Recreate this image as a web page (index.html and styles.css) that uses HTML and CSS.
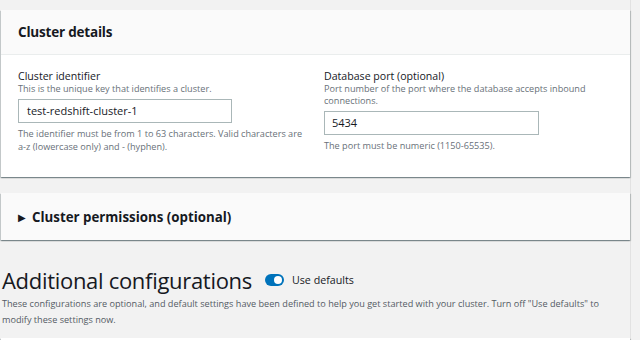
FILE: index.html
```html
<!DOCTYPE html>
<html lang="en">
<head>
    <meta charset="UTF-8">
    <meta name="viewport" content="width=device-width, initial-scale=1.0">
    <title>Cluster configuration</title>
    <link rel="stylesheet" href="styles.css">
</head>
<body>

<div class="page">
    <div class="card">
        <div class="card-header">
            <h2>Cluster details</h2>
        </div>
        <div class="card-body">
            <div class="field">
                <div class="label">Cluster identifier</div>
                <div class="desc">This is the unique key that identifies a cluster.</div>
                <div class="input input-left">test-redshift-cluster-1</div>
                <div class="constraint">The identifier must be from 1 to 63 characters. Valid characters are <span class="nowrap">a-z</span> (lowercase only) and - (hyphen).</div>
            </div>
            <div class="field">
                <div class="label">Database port (optional)</div>
                <div class="desc">Port number of the port where the database accepts inbound connections.</div>
                <div class="input input-right">5434</div>
                <div class="constraint">The port must be numeric (1150-65535).</div>
            </div>
        </div>
    </div>

    <div class="card collapsed">
        <span class="caret">&#9654;</span>
        <h2>Cluster permissions (optional)</h2>
    </div>

    <div class="section">
        <div class="section-title">
            <h1>Additional configurations</h1>
            <span class="toggle"><span class="knob"></span></span>
            <span class="toggle-label">Use defaults</span>
        </div>
        <p class="section-desc">These configurations are optional, and default settings have been defined to help you get started with your cluster. Turn off "Use defaults" to modify these settings now.</p>
    </div>

    <div class="card next"></div>
</div>

</body>
</html>
```

FILE: styles.css
```css
body {
    font-family: "Open Sans", Arial, sans-serif;
    background-color: #f2f2f2;
    color: #16191f;
    margin: 0;
}
.page {
    width: 629px;
    padding: 10px 0 0 1px;
    border-right: 1px solid #e2e2e2;
}
.card {
    background: white;
    box-shadow: 0 1px 1px 0 rgba(0, 28, 36, 0.3), 1px 1px 1px 0 rgba(0, 28, 36, 0.15), -1px 1px 1px 0 rgba(0, 28, 36, 0.15);
}
.card-header {
    height: 44px;
    background: #fafafa;
    border-bottom: 1px solid #eaeded;
    padding: 0 17px;
    display: flex;
    align-items: center;
}
h2 {
    margin: 0;
    font-size: 13.5px;
    letter-spacing: -0.2px;
    font-weight: 700;
}
.card-body {
    display: grid;
    grid-template-columns: 296px 1fr;
    gap: 10px;
    padding: 14px 17px 24px;
}
.label {
    font-size: 10.6px;
    line-height: 14px;
}
.desc {
    font-size: 9.15px;
    line-height: 12px;
    color: #687078;
}
.input {
    margin-top: 4px;
    height: 22px;
    border: 1px solid #aab7b8;
    font-size: 11px;
    line-height: 22px;
    padding: 0 8px;
    box-sizing: content-box;
}
.input-left {
    width: 196px;
}
.input-right {
    width: 198px;
    padding-left: 7px;
}
.constraint {
    margin-top: 4px;
    font-size: 9.15px;
    line-height: 13px;
    color: #687078;
}
.nowrap {
    white-space: nowrap;
}
.collapsed {
    margin-top: 16px;
    height: 47px;
    background: #fafafa;
    display: flex;
    align-items: center;
    padding: 0 17px;
    gap: 6px;
}
.collapsed h2 {
    font-size: 13.3px;
    letter-spacing: 0;
}
.caret {
    font-size: 10px;
}
.section {
    margin-top: 25px;
    margin-left: 1px;
}
.section-title {
    display: flex;
    align-items: center;
}
h1 {
    margin: 0;
    font-size: 22px;
    letter-spacing: -0.3px;
    font-weight: 400;
    line-height: 30px;
}
.toggle {
    position: relative;
    width: 19px;
    height: 12px;
    border-radius: 6px;
    background: #0073bb;
    margin-left: 13px;
}
.knob {
    position: absolute;
    right: 2px;
    top: 2px;
    width: 8px;
    height: 8px;
    border-radius: 50%;
    background: white;
}
.toggle-label {
    font-size: 10.7px;
    margin-left: 8px;
}
.section-desc {
    margin: 1px 0 0;
    font-size: 9.15px;
    line-height: 16px;
    color: #545b64;
}
.next {
    margin-top: 10px;
    height: 20px;
}
```
